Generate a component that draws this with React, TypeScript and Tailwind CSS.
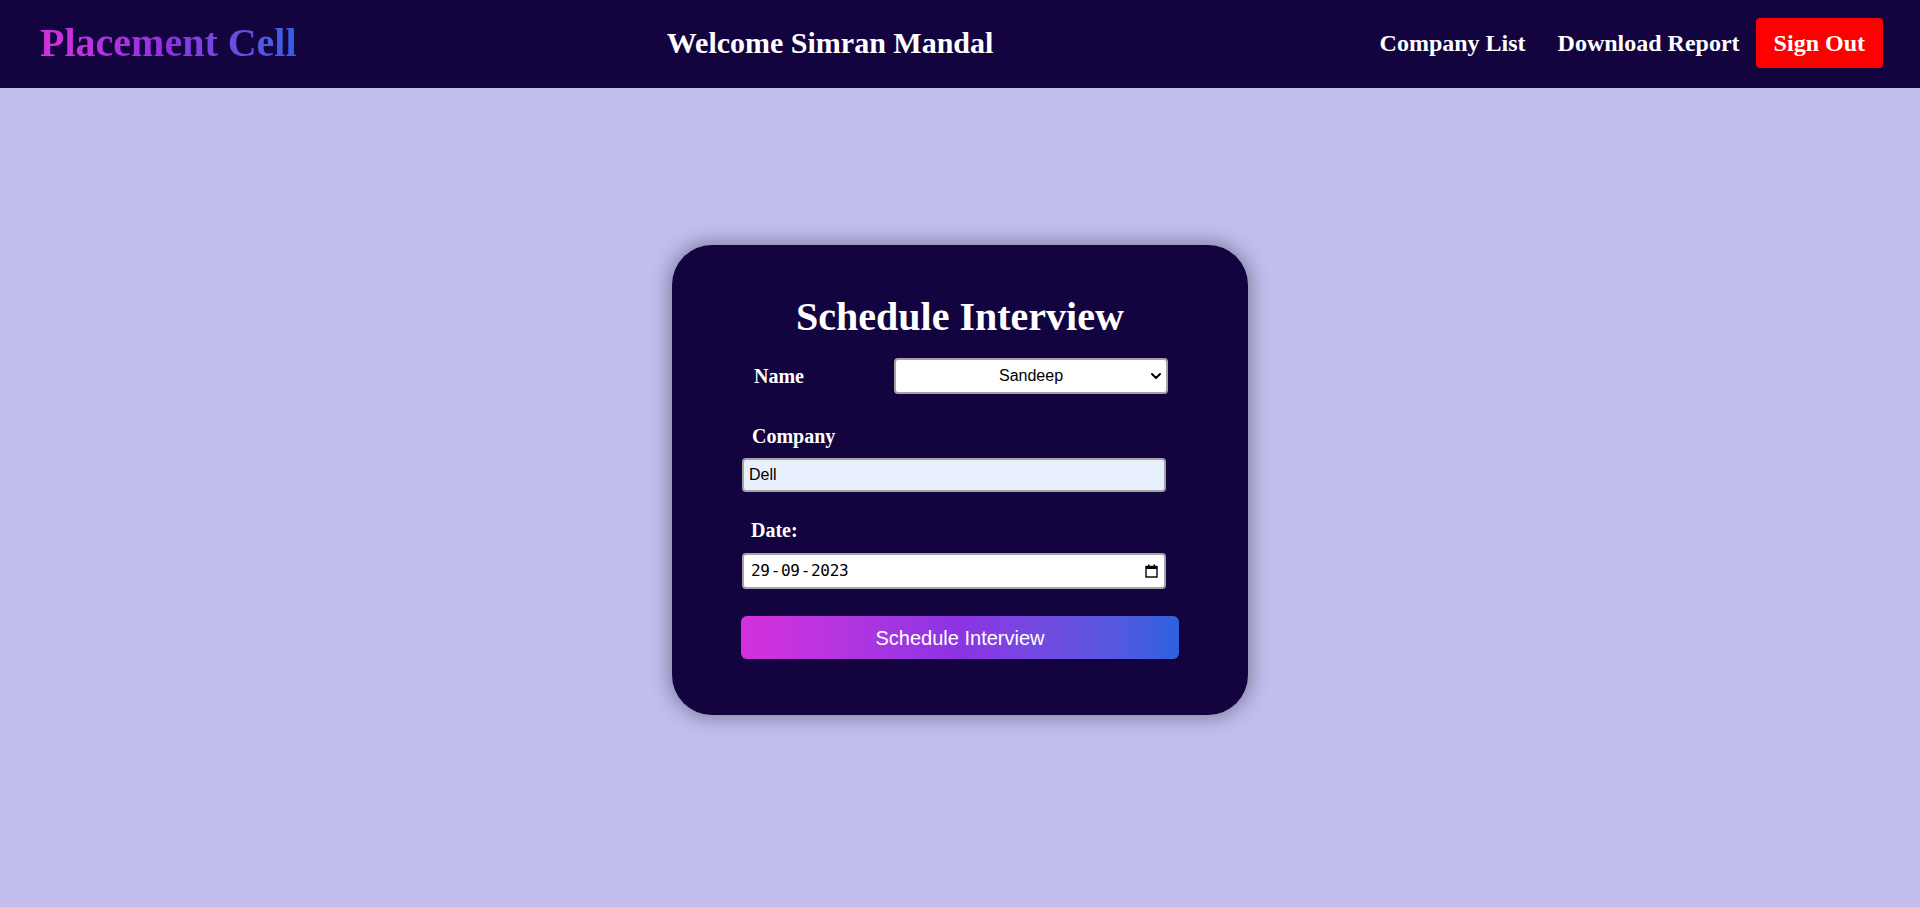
import { useState } from 'react';

const serif = "font-['Liberation_Serif',_'Times_New_Roman',_serif] font-bold";

function Navbar() {
  return (
    <nav className="h-[88px] bg-[#130440] flex items-center justify-between pl-[40px] pr-[37px] pb-[3px]">
      <h1
        className={`${serif} text-[40px] leading-[46px] bg-gradient-to-r from-[#d62fdc] via-[#8f31e2] to-[#2f5fe0] bg-clip-text text-transparent`}
      >
        Placement Cell
      </h1>
      <h2 className={`${serif} text-[30px] leading-[34px] text-white`}>Welcome Simran Mandal</h2>
      <div className="flex items-center">
        <a href="#" className={`${serif} text-[24px] leading-[28px] text-white px-4`}>
          Company List
        </a>
        <a href="#" className={`${serif} text-[24px] leading-[28px] text-white px-4`}>
          Download Report
        </a>
        <button className={`${serif} text-[24px] leading-[28px] text-white bg-[#ff0000] h-[50px] px-[18px] rounded-[4px]`}>
          Sign Out
        </button>
      </div>
    </nav>
  );
}

function CalendarIcon() {
  return (
    <svg width="13" height="14" viewBox="0 0 13 14" fill="none">
      <rect x="1" y="2.5" width="11" height="10.5" stroke="#000" strokeWidth="1.4" />
      <rect x="1" y="2.5" width="11" height="2.5" fill="#000" />
      <rect x="3" y="0.5" width="1.5" height="2.5" fill="#000" />
      <rect x="8.5" y="0.5" width="1.5" height="2.5" fill="#000" />
    </svg>
  );
}

export default function App() {
  const [student, setStudent] = useState('Sandeep');
  const [company, setCompany] = useState('Dell');

  return (
    <div className="min-h-screen bg-[#c1beee]">
      <Navbar />

      <div className="flex justify-center pt-[157px]">
        <div className="w-[576px] h-[470px] bg-[#130440] rounded-[40px] shadow-[0_0_18px_4px_rgba(0,0,0,0.3)] pt-[49px]">
          <h2 className={`${serif} text-[40px] leading-[46px] text-white text-center`}>Schedule Interview</h2>

          <form className="ml-[70px]" onSubmit={(e) => e.preventDefault()}>
            <div className="flex items-center mt-[18px]">
              <label className={`${serif} w-[152px] pl-[12px] text-[20px] leading-[23px] text-white`}>Name</label>
              <div className="relative w-[274px] h-[36px]">
                <select
                  value={student}
                  onChange={(e) => setStudent(e.target.value)}
                  className="appearance-none w-full h-full bg-white border-2 border-[#a4a4a4] rounded-[4px] text-center text-[16px] text-black font-['Liberation_Sans',_Arial,_sans-serif] outline-none"
                >
                  <option>Sandeep</option>
                  <option>Simran</option>
                </select>
                <svg
                  className="absolute right-[6px] top-[13px] pointer-events-none"
                  width="12"
                  height="10"
                  viewBox="0 0 12 10"
                  fill="none"
                >
                  <path d="M2 3l4 4 4-4" stroke="#000" strokeWidth="2" strokeLinecap="round" strokeLinejoin="round" />
                </svg>
              </div>
            </div>

            <label className={`${serif} block mt-[31px] pl-[10px] text-[20px] leading-[23px] text-white`}>Company</label>
            <input
              value={company}
              onChange={(e) => setCompany(e.target.value)}
              className="block mt-[10px] w-[424px] h-[34px] bg-[#e8f0fe] border-2 border-[#a4a4a4] rounded-[4px] px-[5px] text-[16px] text-black font-['Liberation_Sans',_Arial,_sans-serif] outline-none"
            />

            <label className={`${serif} block mt-[27px] pl-[9px] text-[20px] leading-[23px] text-white`}>Date:</label>
            <div className="mt-[11px] w-[424px] h-[36px] bg-white border-2 border-[#a4a4a4] rounded-[4px] flex items-center justify-between pl-[7px] pr-[6px]">
              <span className="flex text-[16px] text-black font-['DejaVu_Sans_Mono',_monospace] tracking-[-0.3px]">
                <span>29</span>
                <span className="mx-[1px]">-</span>
                <span>09</span>
                <span className="mx-[1px]">-</span>
                <span>2023</span>
              </span>
              <CalendarIcon />
            </div>

            <button
              type="submit"
              className="block mt-[27px] -ml-px w-[438px] h-[43px] rounded-[6px] bg-gradient-to-r from-[#d62fdc] via-[#8c33e3] to-[#2b62de] text-white text-[20px] font-['Liberation_Sans',_Arial,_sans-serif]"
            >
              Schedule Interview
            </button>
          </form>
        </div>
      </div>
    </div>
  );
}
